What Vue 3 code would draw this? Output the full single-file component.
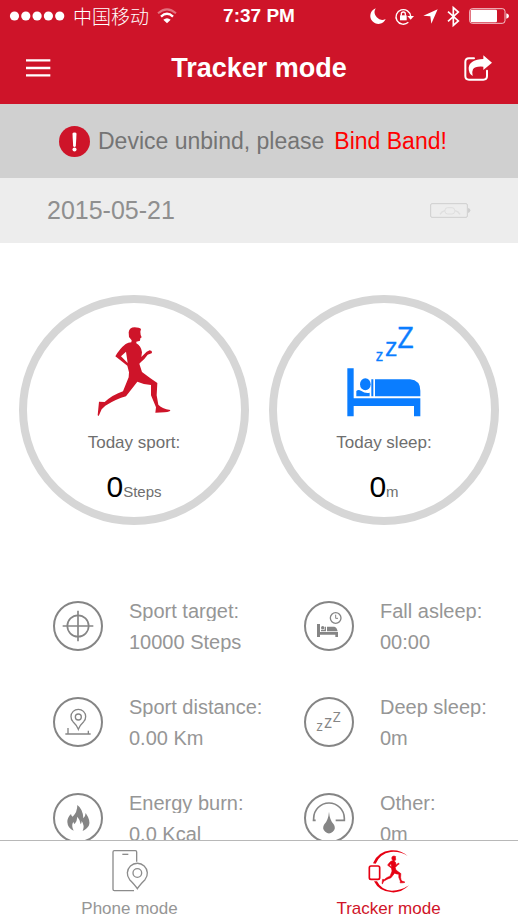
<script setup>
import { ref } from 'vue'

const date = '2015-05-21'
const activeTab = ref('tracker')

const runner =
  'M357 141Q359 126 375 126Q389 126 394 131L392 139L393 149L396 156L392 159L391 166L380 169L380 174Q394 181 397 201L395 215L411 199L420 195L426 197L427 203L422 205L414 208Q405 221 394 230L389 235L397 260Q419 277 443 293L441 330L446 358Q456 369 482 374Q482 380 465 381L437 382L439 366L424 330L424 299Q400 297 383 289L349 333Q320 341 287 361L276 372L267 392L264 390L268 349L285 350Q310 328 340 318L357 276L358 261L353 241L317 213Q330 190 348 176Q356 172 365 171L366 165L358 155ZM349 199L334 213L354 233Z'

const details = [
  { icon: 'target', label: 'Sport target:', value: '10000 Steps' },
  { icon: 'asleep', label: 'Fall asleep:', value: '00:00' },
  { icon: 'distance', label: 'Sport distance:', value: '0.00 Km' },
  { icon: 'deep', label: 'Deep sleep:', value: '0m' },
  { icon: 'energy', label: 'Energy burn:', value: '0.0 Kcal' },
  { icon: 'other', label: 'Other:', value: '0m' }
]
</script>

<template>
  <div class="app">
    <header class="top">
      <div class="status">
        <div class="carrier">
          <svg class="dots" viewBox="0 0 55 10">
            <circle v-for="n in 5" :key="n" :cx="n * 11.3 - 6.3" cy="5" r="4.6" />
          </svg>
          <span class="carrier-name">中国移动</span>
          <svg class="wifi" viewBox="0 0 60 48" fill="none">
            <path d="M3 16Q30 -8 57 16" stroke="#fff" stroke-opacity=".4" stroke-width="6" />
            <path d="M12 26Q30 9 48 26" stroke="#fff" stroke-width="7" />
            <path d="M19 35Q30 26 41 35L30 46Z" fill="#fff" />
          </svg>
        </div>
        <span class="time">7:37 PM</span>
        <div class="indicators">
          <svg width="16" height="16" viewBox="0 0 48 48">
            <path d="M17 1A24 24 0 1 0 47 33A23 23 0 0 1 17 1Z" fill="#fff" />
          </svg>
          <svg width="19" height="17" viewBox="0 0 57 51" fill="none">
            <path d="M40 43A22 22 0 1 1 47 25" stroke="#fff" stroke-width="4" />
            <path d="M37 24H57L47 35Z" fill="#fff" />
            <rect x="15" y="22" width="20" height="15" fill="#fff" />
            <path d="M19 23V18A6 6 0 0 1 31 18V23" stroke="#fff" stroke-width="4" />
          </svg>
          <svg width="15" height="15" viewBox="0 0 45 45">
            <path d="M44 1L25 44L22 22L1 20Z" fill="#fff" />
          </svg>
          <svg width="13" height="21" viewBox="0 0 39 63" fill="none">
            <path d="M3 17L34 45L19 58V5L34 18L3 46" stroke="#fff" stroke-width="5" />
          </svg>
          <svg width="40" height="16" viewBox="0 0 120 48">
            <rect x="2" y="2" width="106" height="44" rx="8" fill="none" stroke="#fff" stroke-width="3" stroke-opacity=".75" />
            <rect x="5" y="5" width="79" height="38" rx="4" fill="#fff" />
            <path d="M112 16Q120 18 120 24Q120 30 112 32Z" fill="#fff" />
          </svg>
        </div>
      </div>
      <div class="nav">
        <button class="icon-btn" type="button" aria-label="Menu">
          <svg width="25" height="18" viewBox="0 0 75 54">
            <path d="M0 4H73M0 27H73M0 49H73" stroke="#fff" stroke-width="7" />
          </svg>
        </button>
        <h1>Tracker mode</h1>
        <button class="icon-btn end" type="button" aria-label="Share">
          <svg width="28" height="26" viewBox="619 164 84 78">
            <path d="M649 174H634Q623 174 623 185V227Q623 238 634 238H677Q688 238 688 227V211" fill="none" stroke="#fff" stroke-width="6" stroke-linecap="round" />
            <path d="M677 165L703 187L677 209V199Q652 197 646 207Q642 214 645 227Q632 218 633 202Q636 178 677 176Z" fill="#fff" />
          </svg>
        </button>
      </div>
    </header>

    <div class="notice">
      <svg width="31" height="31" viewBox="0 0 92 92">
        <circle cx="46" cy="46" r="46" fill="#ce1429" />
        <path d="M40 23Q40 19 46 19Q52 19 52 23L50 59Q49 62 46 62Q43 62 42 59Z" fill="#fff" />
        <circle cx="46" cy="70" r="6" fill="#fff" />
      </svg>
      <p>
        <span>Device unbind, please</span>
        <a href="#bind">Bind Band!</a>
      </p>
    </div>

    <div class="date-bar">
      <time :datetime="date">{{ date }}</time>
      <svg width="41" height="15" viewBox="0 0 123 45" fill="none">
        <rect x="2" y="2" width="110" height="41" rx="4" stroke="#cfcfcf" stroke-width="3" />
        <path d="M114 15Q121 16 121 22Q121 29 114 30Z" fill="#cfcfcf" />
        <path d="M30 34Q35 25 45 23M90 34Q85 25 75 23" stroke="#dfdfdf" stroke-width="4" />
        <rect x="45" y="14" width="29" height="19" rx="8" stroke="#dfdfdf" stroke-width="3" />
      </svg>
    </div>

    <main>
      <section class="rings">
        <div class="ring">
          <svg class="ring-icon" viewBox="262 125 222 270">
            <path :d="runner" fill="#ce1429" fill-rule="evenodd" />
          </svg>
          <p class="ring-label">Today sport:</p>
          <p class="ring-value"><strong>0</strong>Steps</p>
        </div>
        <div class="ring">
          <svg class="ring-icon" viewBox="260 125 222 270" fill="#0a7dff">
            <g class="zzz" stroke="#0a7dff" stroke-width="1">
              <text x="346" y="227" font-size="47">z</text>
              <text x="374" y="212" font-size="78">z</text>
              <text x="411" y="189" font-size="87">Z</text>
            </g>
            <path d="M261 249H280V339H480V393H461V362H280V393H261Z" />
            <ellipse cx="315" cy="297" rx="16" ry="18" />
            <path d="M288 333V317Q294 311 302 316Q315 325 328 322V333Z" />
            <path d="M333 282H339V333H333ZM344 282H449Q480 285 480 316V333H344Z" />
          </svg>
          <p class="ring-label">Today sleep:</p>
          <p class="ring-value"><strong>0</strong>m</p>
        </div>
      </section>

      <section class="details">
        <div v-for="item in details" :key="item.label" class="detail">
          <svg class="detail-icon" viewBox="0 0 150 150" fill="none" stroke="#858585">
            <circle cx="75" cy="75" r="72" stroke-width="6" />
            <g v-if="item.icon === 'target'" stroke-width="5">
              <circle cx="75" cy="75" r="32" />
              <path d="M29 75H121M75 29V121" />
            </g>
            <g v-else-if="item.icon === 'asleep'">
              <circle cx="95" cy="51" r="16" stroke-width="4" />
              <path d="M95 41V52H102" stroke-width="3" />
              <path d="M39 69H48V93H102V108H94V101H48V108H39Z" fill="#858585" stroke="none" />
              <circle cx="56" cy="80" r="5" fill="#858585" stroke="none" />
              <path d="M51 86H63V91H51ZM62 77H66V91H62ZM69 77H91Q98 78 101 91H69Z" fill="#858585" stroke="none" />
            </g>
            <g v-else-if="item.icon === 'distance'">
              <path d="M76 97Q71 84 60 74A22 22 0 1 1 92 74Q81 84 76 97Z" stroke-width="4" />
              <circle cx="76" cy="60" r="9" stroke-width="4" />
              <path d="M37 111H113M45 93V111M106 101V111" stroke-width="4" />
            </g>
            <g v-else-if="item.icon === 'deep'" class="zzz" fill="#858585" stroke="none">
              <text x="37" y="103" font-size="42">z</text>
              <text x="60" y="92" font-size="52">z</text>
              <text x="86" y="74" font-size="42">Z</text>
            </g>
            <path
              v-else-if="item.icon === 'energy'"
              d="M73 36Q90 48 91 76Q97 72 98 60Q113 82 108 97Q104 107 89 114Q96 98 86 84Q86 91 83 94Q80 78 73 71Q72 86 65 93Q62 91 61 86Q54 98 62 113Q44 106 43 87Q43 73 54 63Q55 69 59 71Q73 58 73 36Z"
              fill="#858585"
              stroke="none"
            />
            <g v-else>
              <path d="M26 82H35M29 82V76A46 46 0 0 1 121 76V82H95" stroke-width="5" />
              <path d="M75 56Q77 81 89 94A17 17 0 1 1 61 94Q73 81 75 56Z" fill="#858585" stroke="none" />
            </g>
          </svg>
          <div class="detail-text">
            <p>{{ item.label }}</p>
            <p>{{ item.value }}</p>
          </div>
        </div>
      </section>
    </main>

    <nav class="tabs">
      <button type="button" :class="{ active: activeTab === 'phone' }" @click="activeTab = 'phone'">
        <svg width="36" height="42" viewBox="212 210 108 126" fill="none" stroke="#8c8c8c" stroke-width="4">
          <path d="M286 245V216Q286 212 282 212H219Q215 212 215 216V328Q215 332 219 332H278" />
          <path d="M243 223H261" />
          <path d="M288 326Q282 316 265 299A30 30 0 1 1 311 299Q294 316 288 326Z" />
          <circle cx="288" cy="279" r="13" />
        </svg>
        Phone mode
      </button>
      <button type="button" :class="{ active: activeTab === 'tracker' }" @click="activeTab = 'tracker'">
        <svg width="41" height="42" viewBox="230 209 123 126" fill="#e60012">
          <path d="M349 227Q328 208 299 210Q259 214 245 249L253 250Q266 220 298 215Q325 212 349 227Z" />
          <path d="M248 303H257Q271 331 302 331Q329 331 353 315Q330 338 302 336Q263 334 248 303Z" />
          <rect x="234" y="257" width="31" height="40" rx="5" fill="none" stroke="#e60012" stroke-width="5" />
          <svg x="271" y="227" width="71" height="84" viewBox="263 125 220 268">
            <path :d="runner" fill-rule="evenodd" stroke="#e60012" stroke-width="6" />
          </svg>
        </svg>
        Tracker mode
      </button>
    </nav>
  </div>
</template>

<style>
body {
  margin: 0;
}
</style>

<style scoped>
.app {
  display: flex;
  flex-direction: column;
  height: 100vh;
  background: #fff;
  font-family: "Liberation Sans", Arial, "Noto Sans CJK SC", sans-serif;
}

svg {
  display: block;
  flex: none;
  overflow: visible;
}

p,
h1 {
  margin: 0;
}

button {
  border: 0;
  padding: 0;
  background: none;
  font: inherit;
  cursor: pointer;
}

.top {
  background: #ce1429;
  color: #fff;
}

.status,
.nav {
  display: grid;
  grid-template-columns: 1fr auto 1fr;
  align-items: center;
}

.status {
  height: 32px;
  padding: 0 9px;
}

.carrier,
.indicators {
  display: flex;
  align-items: center;
}

.carrier {
  gap: 8px;
}

.dots {
  width: 56px;
  height: 10px;
  fill: #fff;
}

.carrier-name {
  font-family: "Noto Sans CJK SC", sans-serif;
  font-size: 19px;
  font-weight: 300;
  line-height: 24px;
}

.wifi {
  width: 20px;
  height: 16px;
}

.time {
  font-size: 19px;
  font-weight: 700;
}

.indicators {
  justify-content: flex-end;
  gap: 9px;
}

.nav {
  height: 72px;
  padding: 0 26px;
}

.nav h1 {
  font-size: 27px;
  font-weight: 700;
  line-height: 32px;
}

.icon-btn {
  justify-self: start;
}

.icon-btn.end {
  justify-self: end;
}

.notice {
  display: flex;
  align-items: center;
  gap: 8px;
  height: 74px;
  padding: 0 59px;
  background: #d0d0d0;
  color: #747474;
  font-size: 23px;
  white-space: nowrap;
}

.notice p {
  display: flex;
  gap: 10px;
}

.notice a {
  color: #f00;
  text-decoration: none;
}

.date-bar {
  display: flex;
  align-items: center;
  justify-content: space-between;
  height: 65px;
  padding: 0 47px;
  background: #ededed;
  color: #8f8f8f;
  font-size: 25px;
}

main {
  flex: 1;
  min-height: 0;
  overflow-y: auto;
  scrollbar-width: none;
}

.rings {
  display: grid;
  grid-template-columns: 1fr 1fr;
  gap: 20px;
  padding: 52px 19px 0;
}

.ring {
  display: flex;
  flex-direction: column;
  align-items: center;
  box-sizing: border-box;
  aspect-ratio: 1;
  padding-top: 24px;
  border: 8px solid #d6d6d6;
  border-radius: 50%;
  color: #6e6e6e;
}

.ring-icon {
  width: 74px;
  height: 90px;
}

.ring-label {
  margin-top: 16px;
  font-size: 17px;
  line-height: 20px;
}

.ring-value {
  margin-top: 17px;
  font-size: 15px;
  line-height: 34px;
}

.ring-value strong {
  color: #000;
  font-size: 30px;
  font-weight: 400;
}

.zzz {
  font-family: "Open Sans", "Noto Sans", sans-serif;
}

.details {
  display: grid;
  grid-template-columns: repeat(2, minmax(0, 1fr));
  row-gap: 46px;
  padding: 76px 8px 24px;
}

.detail {
  display: flex;
  gap: 26px;
  height: 50px;
  padding-left: 45px;
}

.detail-icon {
  width: 50px;
  height: 50px;
}

.detail-text {
  display: grid;
  align-content: start;
  gap: 11px;
  color: #969696;
  font-size: 20px;
  line-height: 20px;
  white-space: nowrap;
}

.detail-text p {
  height: 20px;
  overflow-y: clip;
}

.tabs {
  display: grid;
  grid-template-columns: 1fr 1fr;
  height: 79px;
  border-top: 1px solid #b8b8b8;
  background: #fff;
}

.tabs button {
  display: flex;
  flex-direction: column;
  align-items: center;
  gap: 7px;
  padding-top: 9px;
  color: #969696;
  font-size: 17px;
  line-height: 20px;
}

.tabs button.active {
  color: #d01428;
}
</style>
